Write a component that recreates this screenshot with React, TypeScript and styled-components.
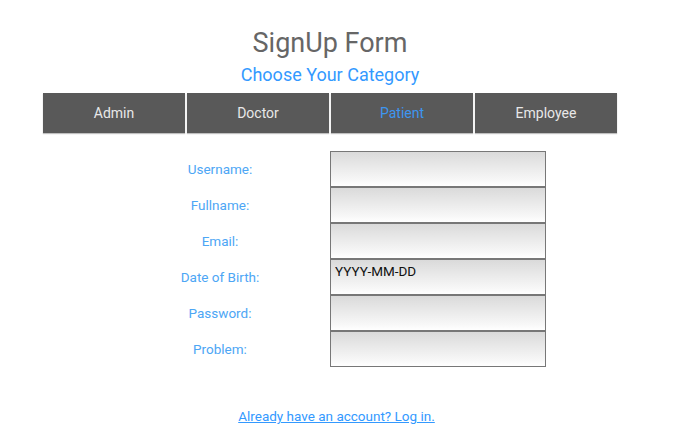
import { useState } from "react";
import styled, { createGlobalStyle } from "styled-components";

const GlobalStyle = createGlobalStyle`
  body {
    margin: 0;
    background: #ffffff;
    font-family: Roboto, "Liberation Sans", sans-serif;
  }
`;

const Page = styled.div`
  width: 574px;
  margin-left: 43px;
  padding-top: 27px;
  display: flex;
  flex-direction: column;
  align-items: center;
`;

const Title = styled.h1`
  margin: 0;
  font-size: 27px;
  line-height: 32px;
  font-weight: 400;
  color: #666666;
`;

const Subtitle = styled.h2`
  margin: 5px 0 0;
  font-size: 18px;
  line-height: 21px;
  font-weight: 400;
  color: #3399ff;
`;

const Tabs = styled.div`
  margin-top: 8px;
  width: 100%;
  display: grid;
  grid-template-columns: repeat(4, 1fr);
  gap: 2px;
`;

const Tab = styled.button<{ $active: boolean }>`
  height: 40px;
  border: none;
  padding: 0;
  background: #595959;
  box-shadow: 0 1px 1px rgba(0, 0, 0, 0.25);
  color: ${(p) => (p.$active ? "#3d96f0" : "#e8e8e8")};
  font-family: Roboto, "Liberation Sans", sans-serif;
  font-size: 14px;
  cursor: pointer;
`;

const Form = styled.form`
  margin-top: 18px;
  align-self: flex-start;
  margin-left: 67px;
  display: grid;
  grid-template-columns: 220px 216px;
`;

const Label = styled.label`
  height: 36px;
  display: flex;
  align-items: center;
  justify-content: center;
  font-size: 13.5px;
  color: #4da6f5;
`;

const Field = styled.input`
  box-sizing: border-box;
  width: 216px;
  height: 36px;
  margin: 0;
  padding: 0 4px 13px;
  border: 1px solid #777777;
  border-radius: 0;
  background: linear-gradient(#dadada, #f8f8f8 85%, #ffffff);
  font-family: Roboto, "Liberation Sans", sans-serif;
  font-size: 13.5px;
  color: #111111;
  outline: none;
  &::placeholder {
    color: #111111;
  }
`;

const LoginLink = styled.a`
  margin-top: 41px;
  margin-left: 13px;
  font-size: 13.5px;
  color: #3399ff;
  text-decoration: underline;
  cursor: pointer;
`;

const categories = ["Admin", "Doctor", "Patient", "Employee"];

const fields = [
  { name: "username", label: "Username:", type: "text", placeholder: "" },
  { name: "fullname", label: "Fullname:", type: "text", placeholder: "" },
  { name: "email", label: "Email:", type: "email", placeholder: "" },
  { name: "dob", label: "Date of Birth:", type: "text", placeholder: "YYYY-MM-DD" },
  { name: "password", label: "Password:", type: "password", placeholder: "" },
  { name: "problem", label: "Problem:", type: "text", placeholder: "" },
];

export default function App() {
  const [category, setCategory] = useState("Patient");

  return (
    <>
      <GlobalStyle />
      <Page>
        <Title>SignUp Form</Title>
        <Subtitle>Choose Your Category</Subtitle>
        <Tabs>
          {categories.map((c) => (
            <Tab key={c} type="button" $active={c === category} onClick={() => setCategory(c)}>
              {c}
            </Tab>
          ))}
        </Tabs>
        <Form onSubmit={(e) => e.preventDefault()}>
          {fields.map((f) => [
            <Label key={f.name + "-label"} htmlFor={f.name}>
              {f.label}
            </Label>,
            <Field key={f.name} id={f.name} name={f.name} type={f.type} placeholder={f.placeholder} />,
          ])}
        </Form>
        <LoginLink>Already have an account? Log in.</LoginLink>
      </Page>
    </>
  );
}
